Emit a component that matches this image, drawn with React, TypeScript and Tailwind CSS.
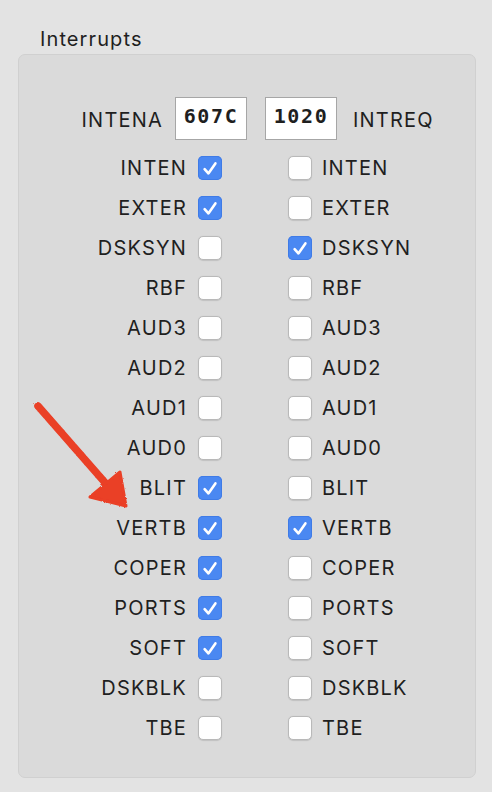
import React from "react";

type Bit = { name: string; ena: boolean; req: boolean };

const bits: Bit[] = [
  { name: "INTEN", ena: true, req: false },
  { name: "EXTER", ena: true, req: false },
  { name: "DSKSYN", ena: false, req: true },
  { name: "RBF", ena: false, req: false },
  { name: "AUD3", ena: false, req: false },
  { name: "AUD2", ena: false, req: false },
  { name: "AUD1", ena: false, req: false },
  { name: "AUD0", ena: false, req: false },
  { name: "BLIT", ena: true, req: false },
  { name: "VERTB", ena: true, req: true },
  { name: "COPER", ena: true, req: false },
  { name: "PORTS", ena: true, req: false },
  { name: "SOFT", ena: true, req: false },
  { name: "DSKBLK", ena: false, req: false },
  { name: "TBE", ena: false, req: false },
];

function Check({ on }: { on: boolean }) {
  if (on) {
    return (
      <div className="w-[24px] h-[24px] rounded-[5px] bg-[#4a88f2] shadow-[inset_0_0_0_1px_#3f7be6] flex items-center justify-center">
        <svg width="24" height="24" viewBox="0 0 24 24">
          <path
            d="M6.6 13.2 L10.4 17.4 L17.4 7.4"
            fill="none"
            stroke="#ffffff"
            strokeWidth="2.6"
            strokeLinecap="round"
            strokeLinejoin="round"
          />
        </svg>
      </div>
    );
  }
  return (
    <div className="w-[24px] h-[24px] rounded-[5px] bg-white border border-[#b9b9b9] shadow-[0_0.5px_1px_rgba(0,0,0,0.12)]" />
  );
}

function HexBox({ value }: { value: string }) {
  return (
    <div className="w-[72px] h-[43px] bg-white border border-[#a6a6a6] flex justify-center pt-[6px] font-['DejaVu_Sans_Mono',monospace] font-bold text-[20px] leading-[24px] tracking-[1.6px] text-[#1f1f1f]">
      {value}
    </div>
  );
}

export default function App() {
  return (
    <div className="w-[492px] h-[792px] bg-[#e3e3e3] relative overflow-hidden font-['Inter','Liberation_Sans',sans-serif] text-[#1f1f1f]">
      <div className="pl-[40px] pt-[27px] h-[54px] text-[20px] leading-[24px] tracking-[1.1px]">
        Interrupts
      </div>
      <div className="ml-[18px] w-[458px] h-[724px] bg-[#dadada] border border-[#d0d0d0] rounded-[7px] pt-[42px]">
        <div className="flex items-center h-[43px]">
          <div className="w-[156px] flex justify-end pr-[12px] text-[20px] tracking-[1.2px] pt-[3px]">
            INTENA
          </div>
          <HexBox value="607C" />
          <div className="w-[18px]" />
          <HexBox value="1020" />
          <div className="pl-[16px] text-[20px] tracking-[1.2px] pt-[3px]">INTREQ</div>
        </div>
        <div className="mt-[8px] flex flex-col">
          {bits.map((b) => (
            <div key={b.name} className="flex items-center h-[40px]">
              <div className="w-[179px] flex justify-end pr-[11px] text-[20px] tracking-[1.2px]">
                {b.name}
              </div>
              <Check on={b.ena} />
              <div className="w-[66px]" />
              <Check on={b.req} />
              <div className="pl-[10px] text-[20px] tracking-[1.2px]">{b.name}</div>
            </div>
          ))}
        </div>
      </div>
      {/* hand-drawn annotation arrow */}
      <svg
        className="absolute left-0 top-0 pointer-events-none"
        width="492"
        height="792"
        viewBox="0 0 492 792"
      >
        <defs>
          <filter id="crayon" x="-10%" y="-10%" width="120%" height="120%">
            <feTurbulence type="fractalNoise" baseFrequency="0.9" numOctaves="2" seed="3" />
            <feDisplacementMap in="SourceGraphic" scale="2.5" />
          </filter>
        </defs>
        <g filter="url(#crayon)">
          <path
            d="M38 406 L108 486"
            stroke="#ea3f26"
            strokeWidth="7.5"
            strokeLinecap="round"
            fill="none"
          />
          <path
            d="M120 472 L126 506 L90 497 Z"
            fill="#ea3f26"
            stroke="#ea3f26"
            strokeWidth="3"
            strokeLinejoin="round"
          />
        </g>
      </svg>
    </div>
  );
}
